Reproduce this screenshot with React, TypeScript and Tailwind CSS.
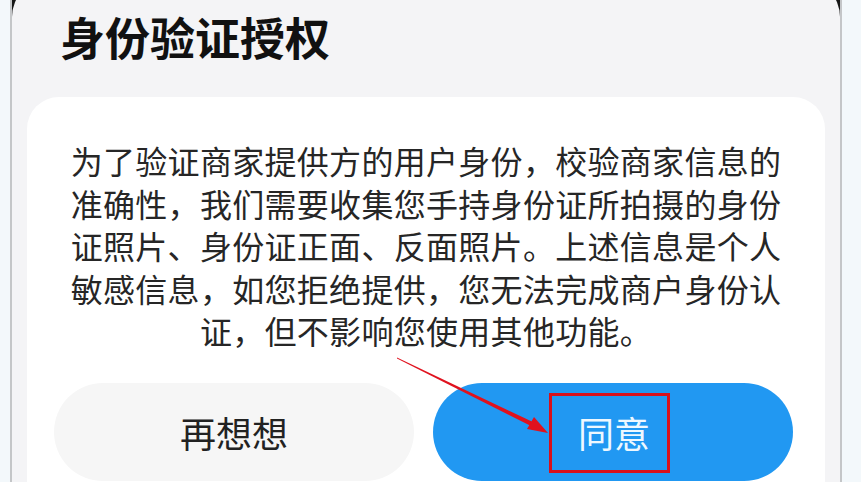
import React from "react";

const cjk = { fontFamily: '"Noto Sans CJK SC", "Noto Sans", sans-serif' };

export default function App() {
  const lines = [
    "为了验证商家提供方的用户身份，校验商家信息的",
    "准确性，我们需要收集您手持身份证所拍摄的身份",
    "证照片、身份证正面、反面照片。上述信息是个人",
    "敏感信息，如您拒绝提供，您无法完成商户身份认",
    "证，但不影响您使用其他功能。",
  ];
  return (
    <div
      className="relative flex h-[482px] w-[861px] overflow-hidden bg-[#f3f8fb]"
      style={cjk}
    >
      <div className="w-[10px] shrink-0" />
      <div className="flex flex-1 flex-col border-x-2 border-[#c4c6c8] bg-[#161616]">
        <div className="-mt-[21px] flex h-[calc(100%+21px)] flex-col rounded-t-[38px] bg-[#f4f4f6]">
          <div className="pl-[48px] pt-[35px] text-[45px] font-bold leading-[45px] text-[#111]">
            身份验证授权
          </div>
          <div className="mx-[15px] mt-[38px] flex flex-1 flex-col rounded-t-[32px] bg-white">
            <div className="flex flex-col items-center pt-[42px] text-[32px] leading-[42.5px] tracking-[0.3px] text-[#262626]">
              {lines.map((l, i) => (
                <div key={i} className="whitespace-nowrap">
                  {l}
                </div>
              ))}
            </div>
            <div className="mt-[31px] flex gap-[19px] pl-[27px]">
              <div className="flex h-[98px] w-[360px] items-center justify-center rounded-full bg-[#f6f6f6] text-[36px] text-[#222]">
                再想想
              </div>
              <div className="flex h-[98px] w-[360px] items-center justify-center rounded-full bg-[#2198f2] pl-[2px] text-[36px] text-[#eef8ff]">
                同意
              </div>
            </div>
          </div>
        </div>
      </div>
      <div className="w-[19px] shrink-0" />

      <div className="absolute left-[549px] top-[393px] h-[80px] w-[121px] border-[3px] border-[#d8101c]" />
      <svg
        className="pointer-events-none absolute left-0 top-0"
        width="861"
        height="482"
        viewBox="0 0 861 482"
      >
        <polygon points="397,357.5 535,423 533,427 397,358.5" fill="#e0121e" />
        <polygon points="548,433 527,429 534,417" fill="#e0121e" />
      </svg>
    </div>
  );
}
